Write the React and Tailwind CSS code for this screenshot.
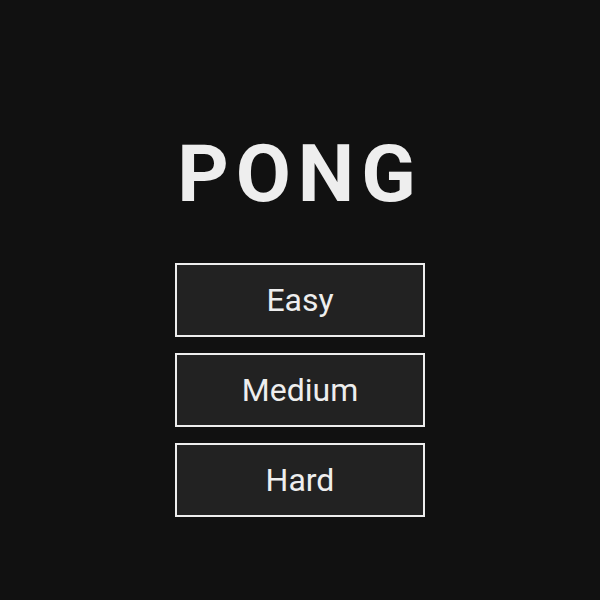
export default function App() {
  const levels = ["Easy", "Medium", "Hard"];
  return (
    <div
      className="flex h-[600px] w-full flex-col items-center bg-[#111111] pt-[134px]"
      style={{ fontFamily: "Roboto, 'Liberation Sans', sans-serif" }}
    >
      <h1 className="text-[80px] font-bold leading-[80px] tracking-[7px] text-[#eeeeee]">
        PONG
      </h1>
      <div className="mt-[49px] flex flex-col gap-4">
        {levels.map((l) => (
          <button
            key={l}
            className="flex h-[74px] w-[250px] items-center justify-center border-2 border-[#eeeeee] bg-[#222222] text-[32px] text-[#eeeeee]"
          >
            {l}
          </button>
        ))}
      </div>
    </div>
  );
}
